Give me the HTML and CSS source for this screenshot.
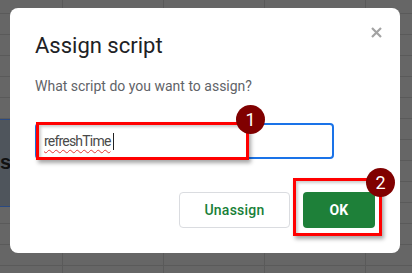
FILE: index.html
```html
<!DOCTYPE html>
<html lang="en">
<head>
<meta charset="utf-8">
<title>Assign script</title>
<link rel="stylesheet" href="styles.css">
</head>
<body>
<div class="sheet-cell"><span>s</span></div>
<div class="overlay">
  <div class="dialog">
    <button class="close" aria-label="Close">
      <svg width="11" height="11" viewBox="0 0 11 11"><path d="M1 1 L10 10 M10 1 L1 10" stroke="#a3a3a3" stroke-width="2.2" fill="none"/></svg>
    </button>
    <h1 class="title">Assign script</h1>
    <p class="subtitle">What script do you want to assign?</p>
    <div class="field">
      <div class="input"><span class="typed">refreshTime</span><span class="caret"></span></div>
      <div class="mark mark-1"></div>
      <div class="badge badge-1">1</div>
    </div>
    <div class="actions">
      <button class="btn btn-secondary">Unassign</button>
      <div class="ok-wrap">
        <button class="btn btn-primary">OK</button>
        <div class="mark mark-2"></div>
        <div class="badge badge-2">2</div>
      </div>
    </div>
  </div>
</div>
</body>
</html>
```

FILE: styles.css
```css
html, body {
  margin: 0;
  padding: 0;
}
body {
  width: 412px;
  height: 273px;
  overflow: hidden;
  position: relative;
  font-family: Roboto, "Liberation Sans", Arial, sans-serif;
  background-color: #666666;
  background-image:
    repeating-linear-gradient(to right, transparent 0, transparent 62px, #5a5a5a 62px, #5a5a5a 63px, transparent 63px, transparent 101px),
    repeating-linear-gradient(to bottom, transparent 0, transparent 13px, #5a5a5a 13px, #5a5a5a 14px, transparent 14px, transparent 21px);
  background-position: 0 0, 0 -21px;
}
.sheet-cell {
  position: absolute;
  left: 0;
  top: 119px;
  width: 40px;
  height: 86px;
  background: #4f555c;
  border-top: 1px solid #2a4a82;
  border-bottom: 1px solid #2a4a82;
}
.sheet-cell span {
  position: absolute;
  left: 0;
  top: 31px;
  font: bold 20px "Liberation Sans", Arial, sans-serif;
  color: #111;
}
.overlay {
  position: relative;
  padding: 8px 12px 0 10px;
}
.dialog {
  position: relative;
  box-sizing: border-box;
  width: 390px;
  height: 245px;
  background: #fff;
  border-radius: 8px;
  padding: 24px 25px 25px 25px;
  display: flex;
  flex-direction: column;
}
.close {
  position: absolute;
  top: 19px;
  right: 18px;
  width: 11px;
  height: 11px;
  padding: 0;
  border: 0;
  background: none;
  display: flex;
}
.title {
  margin: 0;
  font-size: 22px;
  line-height: 28px;
  font-weight: 400;
  color: #202124;
}
.subtitle {
  margin: 16px 0 0 0;
  font-size: 14px;
  line-height: 20px;
  color: #5f6368;
}
.field {
  position: relative;
  margin-top: 27px;
  width: 299px;
  height: 36px;
}
.input {
  box-sizing: border-box;
  height: 36px;
  border: 2px solid #1a73e8;
  border-radius: 4px;
  padding: 0 7px;
  display: flex;
  align-items: center;
  font-size: 14px;
  letter-spacing: -0.8px;
  color: #4a4a4a;
}
.typed {
  text-decoration: underline wavy #e53935;
  text-decoration-skip-ink: none;
  text-underline-offset: 3px;
  text-decoration-thickness: 1px;
}
.caret {
  width: 1px;
  height: 17px;
  background: #222;
  margin-left: 2px;
}
.mark {
  position: absolute;
  box-sizing: border-box;
  border: 3px solid #ff0000;
  box-shadow: 2px 3px 4px rgba(0, 0, 0, 0.35), inset 2px 2px 3px rgba(0, 0, 0, 0.2);
}
.mark-1 {
  left: 1px;
  top: -1px;
  width: 213px;
  height: 38px;
}
.badge {
  position: absolute;
  width: 29px;
  height: 29px;
  border-radius: 50%;
  background: #800000;
  color: #fff;
  font-size: 18px;
  line-height: 29px;
  text-align: center;
  font-family: Roboto, "Liberation Sans", Arial, sans-serif;
}
.badge-1 {
  left: 201px;
  top: -18px;
}
.actions {
  margin-top: auto;
  display: flex;
  justify-content: flex-end;
  gap: 13px;
}
.ok-wrap {
  position: relative;
}
.btn {
  box-sizing: border-box;
  height: 36px;
  border-radius: 4px;
  font-family: Roboto, "Liberation Sans", Arial, sans-serif;
  font-size: 14px;
  font-weight: 500;
  letter-spacing: 0.25px;
  padding: 0;
}
.btn-secondary {
  width: 111px;
  background: #fff;
  border: 1px solid #dadce0;
  color: #188038;
}
.btn-primary {
  width: 72px;
  background: #1e8039;
  border: 0;
  color: #fff;
  font-weight: 700;
}
.mark-2 {
  left: -10px;
  top: -14px;
  width: 89px;
  height: 58px;
}
.badge-2 {
  left: 63px;
  top: -24px;
}
```
